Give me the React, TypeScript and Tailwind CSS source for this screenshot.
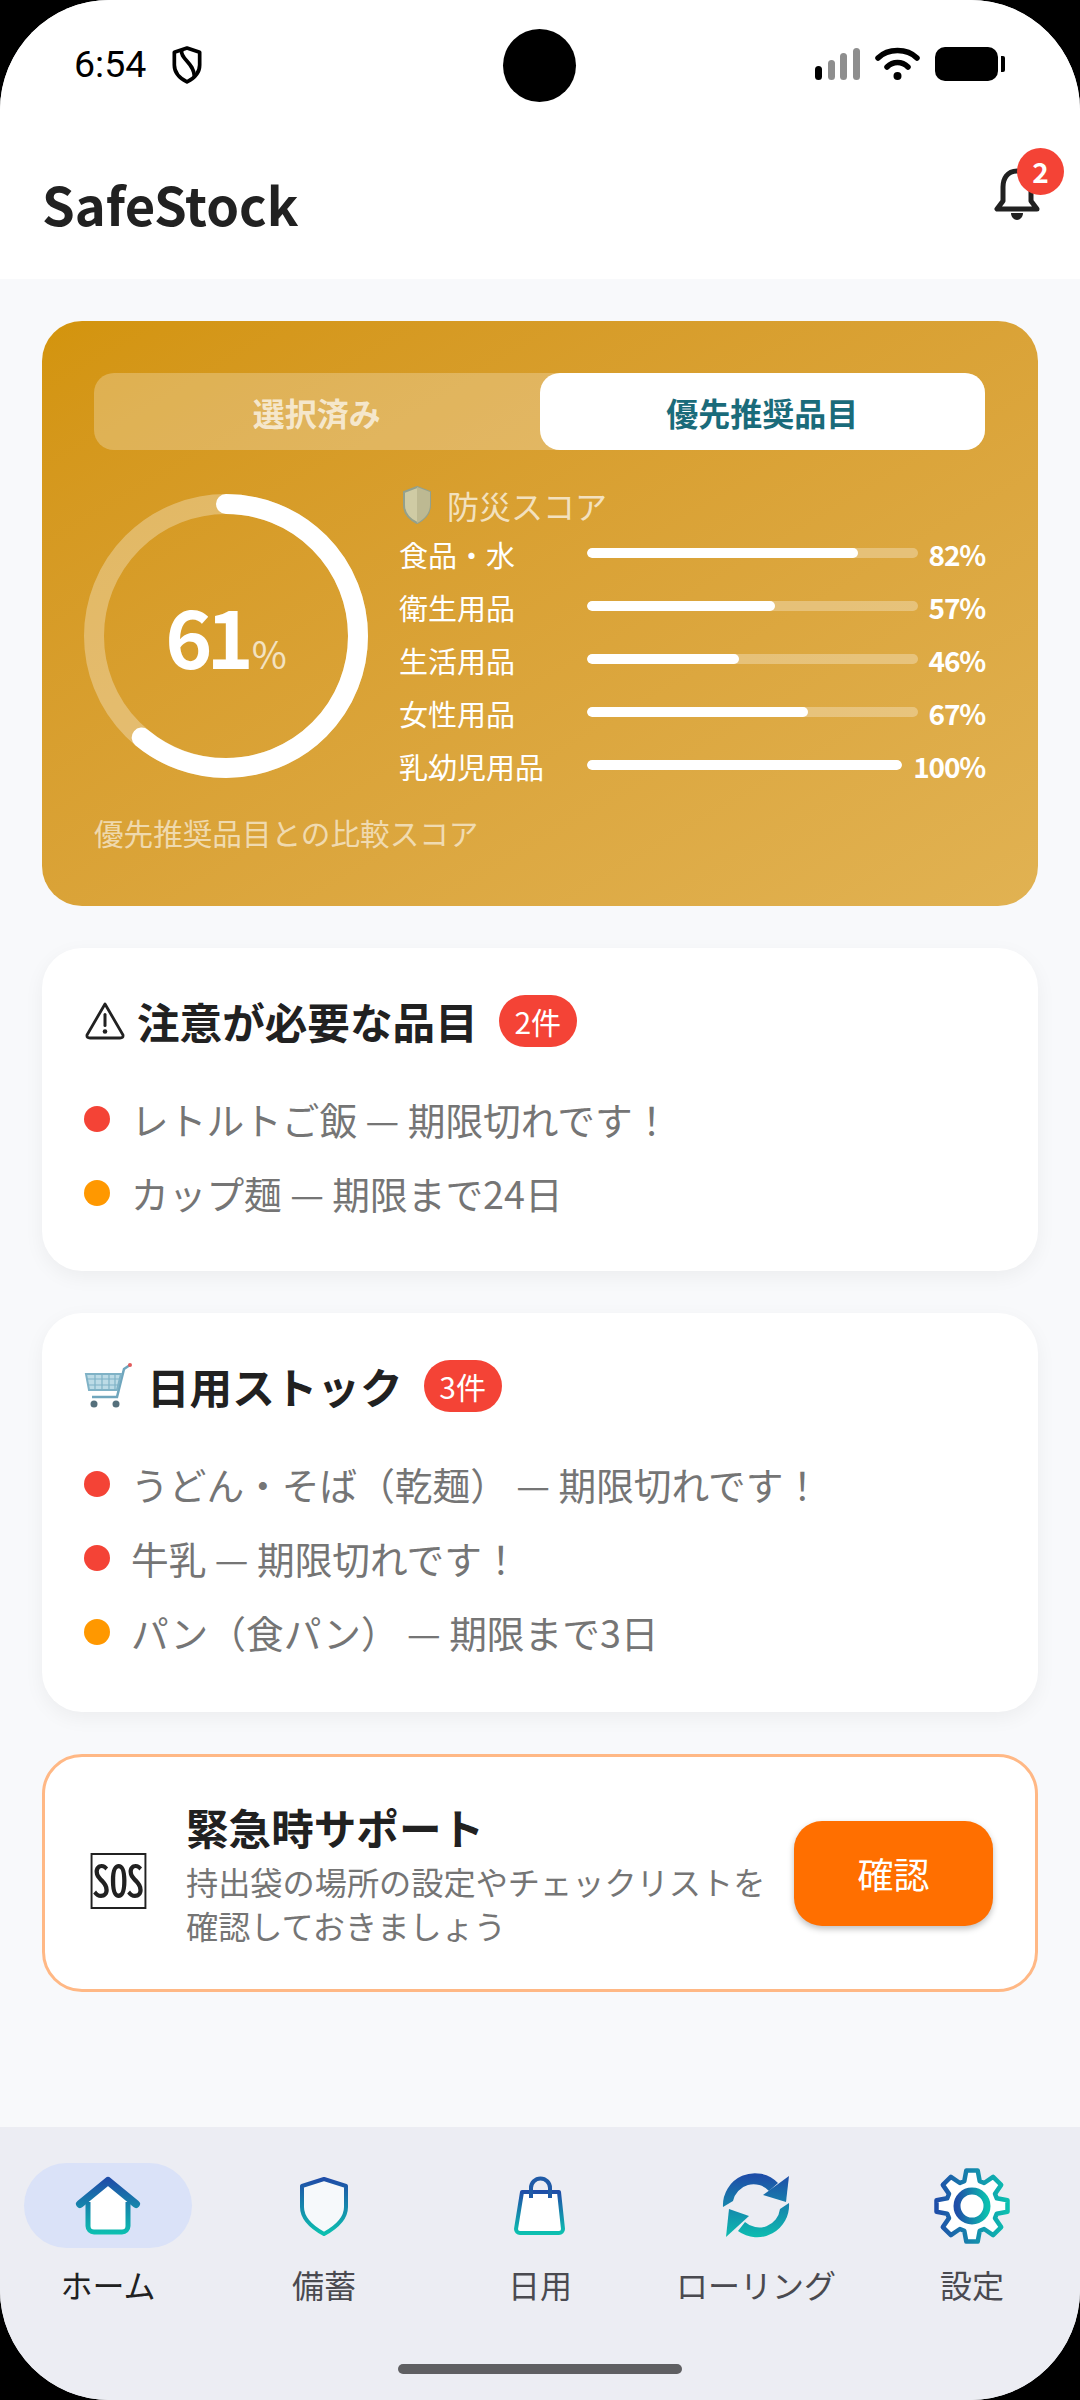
import type { ReactNode } from 'react';

const SCORES = [
  { label: '食品・水', value: 82 },
  { label: '衛生用品', value: 57 },
  { label: '生活用品', value: 46 },
  { label: '女性用品', value: 67 },
  { label: '乳幼児用品', value: 100 },
];

const ALERTS = [
  { text: 'レトルトご飯 — 期限切れです！', tone: 'red' },
  { text: 'カップ麺 — 期限まで24日', tone: 'orange' },
];

const DAILY = [
  { text: 'うどん・そば（乾麺） — 期限切れです！', tone: 'red' },
  { text: '牛乳 — 期限切れです！', tone: 'red' },
  { text: 'パン（食パン） — 期限まで3日', tone: 'orange' },
];

function Grad({ id, diagonal }: { id: string; diagonal?: boolean }) {
  return (
    <linearGradient id={id} x1="0" y1="0" x2={diagonal ? '1' : '0'} y2={diagonal ? '0' : '1'}>
      <stop offset="0" stopColor="#1f4ea8" />
      <stop offset="1" stopColor="#0cc0b0" />
    </linearGradient>
  );
}

function StatusBar() {
  return (
    <div className="relative h-[100px] flex items-center justify-between pl-[74px] pr-[75px] bg-white">
      <div className="flex items-center gap-[25px] pt-[30px]">
        <span className="text-[37.500px] leading-none text-black font-['Roboto',sans-serif]">6:54</span>
        <svg width="32" height="38" viewBox="0 0 30 36" fill="none" stroke="black" strokeWidth="3.5">
          <path d="M15 2 L27 6 V18 C27 26 21 31 15 34 C9 31 3 26 3 18 V6 Z" strokeLinejoin="round" />
          <path d="M10 4 C8 12 22 16 22 29" />
        </svg>
      </div>
      <div className="absolute left-[503px] top-[29px] w-[73px] h-[73px] rounded-full bg-black" />
      <svg className="mt-[30px]" width="190" height="36" viewBox="0 0 190 36">
        <rect x="0" y="19" width="7" height="14" rx="3.5" fill="#000" />
        <rect x="13" y="13" width="7" height="20" rx="3.5" fill="#8e8e8e" />
        <rect x="25" y="6" width="7" height="27" rx="3.5" fill="#8e8e8e" />
        <rect x="38" y="1" width="7" height="32" rx="3.5" fill="#8e8e8e" />
        <path d="M63 11 C73 1 92 1 102 11" fill="none" stroke="#000" strokeWidth="5.5" strokeLinecap="round" />
        <path d="M72 20 C78 14 87 14 93 20" fill="none" stroke="#000" strokeWidth="5.5" strokeLinecap="round" />
        <circle cx="82.5" cy="29" r="4" fill="#000" />
        <rect x="120" y="0" width="63" height="34" rx="10" fill="#000" />
        <path d="M186 9 H188 A2 2 0 0 1 190 11 V23 A2 2 0 0 1 188 25 H186 Z" fill="#000" />
      </svg>
    </div>
  );
}

function Header() {
  return (
    <header className="h-[179px] bg-white flex items-center justify-between pl-[42px] pr-[42px] pb-[2px]">
      <h1 className="text-[52.500px] leading-none font-bold text-[#212121] mt-[30px]">SafeStock</h1>
      <div className="relative w-[44px] h-[54px] mt-[10px]">
        <svg width="46" height="54" viewBox="0 0 46 54" fill="none">
          <path d="M23 4 C13 4 9 12 9 20 V34 L3 42 H43 L37 34 V20 C37 12 33 4 23 4 Z" stroke="#212121" strokeWidth="5" strokeLinejoin="round" />
          <path d="M17 46 H29 C29 50 26 53 23 53 C20 53 17 50 17 46 Z" fill="#212121" />
        </svg>
        <span className="absolute left-[23px] -top-[19px] w-[47px] h-[47px] rounded-full bg-[#f44336] text-white text-[28px] font-bold flex items-center justify-center leading-none">
          2
        </span>
      </div>
    </header>
  );
}

function ScoreRing() {
  const r = 132;
  const c = 2 * Math.PI * r;
  return (
    <div className="relative w-[284px] h-[284px] shrink-0 ml-[1px]">
      <svg width="284" height="284" viewBox="0 0 284 284" className="overflow-visible">
        <circle cx="142" cy="142" r={r} fill="none" stroke="rgba(255,255,255,0.3)" strokeWidth="20" />
        <circle
          cx="142"
          cy="142"
          r={r}
          fill="none"
          stroke="#fff"
          strokeWidth="20"
          strokeLinecap="round"
          strokeDasharray={`${c * 0.61} ${c}`}
          transform="rotate(-90 142 142)"
        />
      </svg>
      <div className="absolute inset-0 flex items-baseline justify-center pt-[100px] text-white">
        <span className="text-[80px] leading-none font-bold tracking-[-6px]">61</span>
        <span className="text-[38px] leading-none opacity-70 ml-[4px]">%</span>
      </div>
    </div>
  );
}

function HeroCard() {
  return (
    <section className="h-[585px] rounded-[40px] bg-gradient-to-br from-[#d3940c] to-[#e1b252] pt-[52px] pl-[41px] pr-[53px]">
      <div className="ml-[11px] h-[77px] flex rounded-[20px] bg-white/25">
        <div className="flex-1 flex items-center justify-center text-[32px] font-bold text-white/70">選択済み</div>
        <div className="flex-1 flex items-center justify-center text-[32px] font-bold text-[#1a6b7a] bg-white rounded-[20px]">優先推奨品目</div>
      </div>
      <div className="flex mt-[44px] gap-[31px]">
        <ScoreRing />
        <div className="flex-1 -mt-[9px]">
          <div className="flex items-center gap-[15px] h-[40px] pl-[3px] text-[32px] leading-none text-white/70">
            <svg width="30" height="38" viewBox="0 0 30 38">
              <path d="M15 1 L28 6 V19 C28 28 21 34 15 37 C9 34 2 28 2 19 V6 Z" fill="#cfcba4" stroke="#93a08c" strokeWidth="2" />
              <path d="M15 1 L28 6 V19 C28 28 21 34 15 37 Z" fill="#bdb992" />
            </svg>
            防災スコア
          </div>
          <div className="mt-[9px] flex flex-col gap-[13px]">
            {SCORES.map((s) => (
              <div key={s.label} className="h-[40px] flex items-center text-white">
                <span className="w-[188px] shrink-0 text-[29px] leading-none">{s.label}</span>
                <div className="flex-1 h-[10px] mb-[2px] rounded-full bg-white/30 overflow-hidden">
                  <div className="h-full rounded-full bg-white" style={{ width: `${s.value}%` }} />
                </div>
                <span className="ml-[11px] text-[28px] leading-none font-bold tracking-[-1.200px]">{s.value}%</span>
              </div>
            ))}
          </div>
        </div>
      </div>
      <p className="ml-[11px] mt-[27px] text-[29.600px] leading-[40px] text-white/60">優先推奨品目との比較スコア</p>
    </section>
  );
}

function Dot({ tone }: { tone: string }) {
  return <span className={tone === 'red' ? 'w-[26px] h-[26px] rounded-full bg-[#f44336] shrink-0' : 'w-[26px] h-[26px] rounded-full bg-[#ff9800] shrink-0'} />;
}

function StockCard({ title, icon, count, items, className }: { title: string; icon: ReactNode; count: string; items: { text: string; tone: string }[]; className: string }) {
  return (
    <section className={`rounded-[40px] bg-white shadow-[0_6px_20px_rgba(0,0,0,0.05)] pt-[46px] pl-[42px] ${className}`}>
      <div className="flex items-center h-[54px]">
        {icon}
        <h2 className="text-[42.600px] leading-none font-bold text-[#212121]">{title}</h2>
        <span className="ml-[21px] w-[78px] h-[52px] rounded-[26px] bg-[#f44336] text-white text-[30px] leading-none flex items-center justify-center">{count}</span>
      </div>
      <ul className="mt-[46px] flex flex-col gap-[24px]">
        {items.map((it) => (
          <li key={it.text} className="flex items-center gap-[21px] h-[50px]">
            <Dot tone={it.tone} />
            <span className="text-[37.700px] leading-none text-[#757575]">{it.text}</span>
          </li>
        ))}
      </ul>
    </section>
  );
}

function WarnIcon() {
  return (
    <svg className="mr-[12px] shrink-0 ml-[1px]" width="40" height="38" viewBox="0 0 40 38" fill="none">
      <path d="M20 2 L38 33 Q38.500 36 35 36 H5 Q1.500 36 2 33 Z" stroke="#212121" strokeWidth="2.800" strokeLinejoin="round" />
      <rect x="18.500" y="11" width="3" height="14" rx="1.500" fill="#212121" />
      <circle cx="20" cy="29.500" r="2.300" fill="#212121" />
    </svg>
  );
}

function CartIcon() {
  return (
    <svg className="mr-[15px] shrink-0" width="48" height="46" viewBox="0 0 48 46" fill="none">
      <path d="M46 2 L40 6 L33 34 H8" stroke="#6fa6bd" strokeWidth="2.500" />
      <path d="M2 11 H37 L33 27 H5 Z" fill="#bcdbe6" stroke="#7fb2c6" strokeWidth="2" />
      <path d="M11 11 V27 M18 11 V27 M25 11 V27 M31 11 V27 M3 16 H36 M4 22 H34" stroke="#7fb2c6" strokeWidth="1.200" />
      <circle cx="10" cy="41" r="3.500" fill="#55707c" />
      <circle cx="32" cy="41" r="3.500" fill="#55707c" />
      <circle cx="46" cy="2" r="2" fill="#e25b5b" />
    </svg>
  );
}

function SosCard() {
  return (
    <section className="h-[238px] rounded-[40px] bg-white border-[3px] border-[#ffb885] flex items-center pl-[45px] pr-[42px]">
      <span className="w-[57px] mt-[10px] shrink-0 text-[62px] leading-none text-[#212121] flex items-center justify-center">🆘</span>
      <div className="ml-[39px] flex-1">
        <h3 className="text-[42.600px] leading-[54px] font-bold text-[#212121]">緊急時サポート</h3>
        <p className="mt-[5px] text-[32.200px] leading-[44px] text-[#757575]">
          持出袋の場所の設定やチェックリストを
          <br />
          確認しておきましょう
        </p>
      </div>
      <button className="w-[199px] h-[105px] rounded-[28px] bg-[#ff6f00] text-white text-[36px] shadow-[0_3px_6px_rgba(0,0,0,0.25)]">確認</button>
    </section>
  );
}

function HomeIcon() {
  return (
    <svg width="66" height="60" viewBox="0 0 66 60" fill="none">
      <defs>
        <linearGradient id="g-home" gradientUnits="userSpaceOnUse" x1="0" y1="4" x2="0" y2="58">
          <stop offset="0" stopColor="#1f4ea8" />
          <stop offset="1" stopColor="#0cc0b0" />
        </linearGradient>
      </defs>
      <path d="M12 26 L33 8 L54 26 V51 A5 5 0 0 1 49 56 H17 A5 5 0 0 1 12 51 Z" fill="#fff" />
      <path d="M13 26 V50 A6 6 0 0 0 19 56 H47 A6 6 0 0 0 53 50 V26" stroke="url(#g-home)" strokeWidth="5" />
      <path d="M5 28 L33 5 L61 28" stroke="url(#g-home)" strokeWidth="8" strokeLinecap="round" strokeLinejoin="round" />
    </svg>
  );
}

function ShieldIcon() {
  return (
    <svg width="50" height="60" viewBox="0 0 50 60" fill="none">
      <defs><Grad id="g-shield" /></defs>
      <path d="M25 3 L47 10 V31 C47 44 36 52 25 58 C14 52 3 44 3 31 V10 Z" fill="#f6f9fb" stroke="url(#g-shield)" strokeWidth="4" strokeLinejoin="round" />
    </svg>
  );
}

function BagIcon() {
  return (
    <svg width="52" height="60" viewBox="0 0 52 60" fill="none">
      <defs><Grad id="g-bag" /></defs>
      <path d="M8 16 H45 L49 53 A4 4 0 0 1 45 57 H6 A4 4 0 0 1 2 53 Z" fill="#fff" stroke="url(#g-bag)" strokeWidth="4" strokeLinejoin="round" />
      <path d="M17 22 V12 A9.500 9.500 0 0 1 36 12 V22" stroke="#1f5aa6" strokeWidth="4" />
    </svg>
  );
}

function RollingIcon() {
  return (
    <svg width="70" height="70" viewBox="0 0 70 70" fill="none">
      <defs>
        <linearGradient id="g-roll" gradientUnits="userSpaceOnUse" x1="0" y1="5" x2="0" y2="68">
          <stop offset="0" stopColor="#1f4ea8" />
          <stop offset="1" stopColor="#0cc0b0" />
        </linearGradient>
      </defs>
      <path d="M2 36 A32 32 0 0 1 57 12 L48 20 A21 21 0 0 0 12 30 Z" fill="url(#g-roll)" />
      <path d="M68 5 L65 31 L42 24 Z" fill="url(#g-roll)" />
      <path d="M68 32 A32 32 0 0 1 17 60 L24 51 A21 21 0 0 0 59 38 Z" fill="url(#g-roll)" />
      <path d="M5 66 L8 38 L28 45 Z" fill="url(#g-roll)" />
    </svg>
  );
}

function gearPath() {
  const cx = 39;
  const cy = 39;
  const pts: string[] = [];
  for (let i = 0; i < 8; i++) {
    const a = (i * Math.PI) / 4 - Math.PI / 2;
    const at = (r: number, d: number) => `${(cx + r * Math.cos(a + d)).toFixed(1)} ${(cy + r * Math.sin(a + d)).toFixed(1)}`;
    pts.push(i === 0 ? `M${at(26, -0.3)}` : `L${at(26, -0.3)}`);
    pts.push(`L${at(36, -0.16)}`, `L${at(36, 0.16)}`, `L${at(26, 0.3)}`);
  }
  return `${pts.join(' ')} Z`;
}

function GearIcon() {
  return (
    <svg width="78" height="78" viewBox="0 0 78 78" fill="none">
      <defs><Grad id="g-gear" diagonal /></defs>
      <path d={gearPath()} fill="#fff" stroke="url(#g-gear)" strokeWidth="4.500" strokeLinejoin="round" />
      <circle cx="39" cy="39" r="15" fill="#fff" stroke="url(#g-gear)" strokeWidth="7" />
    </svg>
  );
}

const NAV = [
  { label: 'ホーム', icon: <HomeIcon />, active: true },
  { label: '備蓄', icon: <ShieldIcon /> },
  { label: '日用', icon: <BagIcon /> },
  { label: 'ローリング', icon: <RollingIcon /> },
  { label: '設定', icon: <GearIcon /> },
];

function BottomNav() {
  return (
    <nav className="relative h-[273px] bg-[#ecedf3] grid grid-cols-5 pt-[36px]">
      {NAV.map((n) => (
        <div key={n.label} className="flex flex-col items-center">
          <div className={n.active ? 'w-[168px] h-[85px] rounded-full bg-[#dae2f8] flex items-center justify-center' : 'w-[168px] h-[85px] flex items-center justify-center'}>
            {n.icon}
          </div>
          <span className={n.active ? 'mt-[16px] text-[32px] leading-[40px] text-[#212121]' : 'mt-[16px] text-[32px] leading-[40px] text-[#4a4a50]'}>{n.label}</span>
        </div>
      ))}
      <div className="absolute left-[398px] top-[237px] w-[284px] h-[10px] rounded-full bg-[#5f5f62]" />
    </nav>
  );
}

export default function App() {
  return (
    <div className="w-[1080px] h-[2400px] bg-black font-['Noto_Sans_CJK_JP','Noto_Sans',sans-serif]">
      <div className="w-full h-full rounded-[110px] overflow-hidden flex flex-col bg-[#f8f9fb]">
        <StatusBar />
        <Header />
        <main className="flex-1 px-[42px] pt-[42px] flex flex-col gap-[42px]">
          <HeroCard />
          <StockCard title="注意が必要な品目" icon={<WarnIcon />} count="2件" items={ALERTS} className="h-[323px]" />
          <StockCard title="日用ストック" icon={<CartIcon />} count="3件" items={DAILY} className="h-[399px]" />
          <SosCard />
        </main>
        <BottomNav />
      </div>
    </div>
  );
}
